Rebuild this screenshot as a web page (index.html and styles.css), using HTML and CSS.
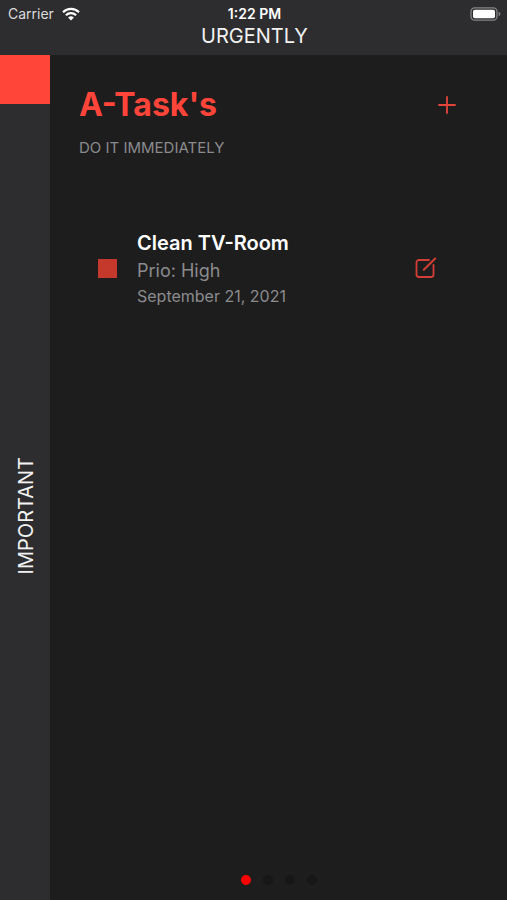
FILE: index.html
```html
<!DOCTYPE html>
<html lang="en">
<head>
    <meta charset="UTF-8">
    <meta name="viewport" content="width=device-width, initial-scale=1.0">
    <title>A-Task's</title>
    <link rel="stylesheet" href="styles.css">
</head>
<body>
    <header class="top">
        <div class="status-bar">
            <div class="carrier">
                <span>Carrier</span>
                <svg class="wifi" viewBox="0 0 18 14" aria-hidden="true">
                    <path d="M1 5.2a11.5 11.5 0 0 1 16 0M3.9 8.2a7.3 7.3 0 0 1 10.2 0" fill="none" stroke="#fff" stroke-width="2.2"/>
                    <path d="M9 13.6l-2.9-3a4.2 4.2 0 0 1 5.8 0z" fill="#fff"/>
                </svg>
            </div>
            <span class="time">1:22 PM</span>
            <svg class="battery" viewBox="0 0 31 14" aria-hidden="true">
                <rect x="1" y=".8" width="26" height="12.4" rx="3.6" fill="none" stroke="#858587" stroke-width="1.3"/>
                <rect x="3" y="2.8" width="22" height="8.4" rx="1.8" fill="#fff"/>
                <path d="M28.6 4.8c2.4 1 2.4 3.4 0 4.4z" fill="#858587"/>
            </svg>
        </div>
        <div class="axis-label">URGENTLY</div>
    </header>

    <div class="board">
        <aside class="side">
            <div class="marker"></div>
            <div class="side-label"><span class="axis-label vertical">IMPORTANT</span></div>
        </aside>

        <main class="content">
            <div class="heading">
                <h1>A-Task's</h1>
                <button class="icon-btn" type="button" aria-label="Add task">
                    <svg width="18" height="18" viewBox="0 0 18 18"><path d="M9 1v16M1 9h16" fill="none" stroke="#e5443b" stroke-width="1.8" stroke-linecap="round"/></svg>
                </button>
            </div>
            <p class="subtitle">DO IT IMMEDIATELY</p>

            <div class="task">
                <button class="check" type="button" aria-label="Complete task"></button>
                <div class="task-text">
                    <h2>Clean TV-Room</h2>
                    <p class="prio">Prio: High</p>
                    <p class="date">September 21, 2021</p>
                </div>
                <button class="icon-btn" type="button" aria-label="Edit task">
                    <svg width="22" height="22" viewBox="0 0 22 22" fill="none" stroke="#d33f36" stroke-linecap="round">
                        <path d="M14 3H4a2.5 2.5 0 0 0-2.5 2.5v12A2.5 2.5 0 0 0 4 20h12a2.5 2.5 0 0 0 2.5-2.5V8" stroke-width="1.8"/>
                        <path d="M9 12.500l11.200-11" stroke-width="2"/>
                        <path d="M8.300 13.200l.9-.3" stroke-width="1.200"/>
                    </svg>
                </button>
            </div>

            <div class="pages">
                <span class="dot active"></span>
                <span class="dot"></span>
                <span class="dot"></span>
                <span class="dot"></span>
            </div>
        </main>
    </div>
</body>
</html>
```

FILE: styles.css
```css
* { box-sizing: border-box; }
body { margin: 0; min-height: 100vh; display: flex; flex-direction: column; background: #1d1d1e; color: #fff; font-family: Inter, "Liberation Sans", sans-serif; }
h1, h2, p { margin: 0; }
button { border: none; padding: 0; cursor: pointer; }

.top { background: #2d2d2f; text-align: center; padding: 3px 6px 7px 8px; }
.status-bar { display: grid; grid-template-columns: 1fr auto 1fr; align-items: center; height: 21px; font-size: 14px; line-height: 20px; }
.carrier { display: flex; align-items: center; gap: 8px; color: #dcdcdd; }
.wifi { width: 18px; height: 14px; }
.time { font-weight: 600; }
.battery { width: 31px; height: 14px; justify-self: end; }
.axis-label { font-size: 20px; line-height: 24px; color: #f2f2f2; }

.board { flex: 1; display: flex; }
.side { width: 50px; display: flex; flex-direction: column; background: #2d2d2f; }
.marker { height: 49px; background: #ff453a; }
.side-label { flex: 1; display: flex; align-items: center; justify-content: center; padding: 28px 0 0 2px; }
.vertical { writing-mode: vertical-rl; transform: rotate(180deg); }

.content { flex: 1; display: flex; flex-direction: column; padding: 29px 0 15px; }
.heading { display: flex; align-items: center; justify-content: space-between; padding: 0 51px 0 29px; }
.heading h1 { font-size: 32px; line-height: 42px; font-weight: 700; color: #ff453a; }
.icon-btn { display: flex; background: none; }
.subtitle { margin-top: 12px; padding: 0 29px; font-size: 15px; line-height: 20px; color: #8b8b8d; }

.task { display: flex; align-items: center; margin-top: 71px; padding: 0 70px 0 48px; }
.check { width: 19px; height: 19px; background: #c5392d; }
.task-text { flex: 1; margin-left: 20px; color: #8b8b8d; }
.task-text h2 { font-size: 20px; line-height: 28px; font-weight: 600; color: #fff; }
.prio { font-size: 18px; line-height: 28px; }
.date { font-size: 16px; line-height: 22px; }

.pages { display: flex; justify-content: center; gap: 12px; margin-top: auto; }
.dot { width: 10px; height: 10px; border-radius: 50%; background: #171718; }
.dot.active { background: #ff0000; }
```
